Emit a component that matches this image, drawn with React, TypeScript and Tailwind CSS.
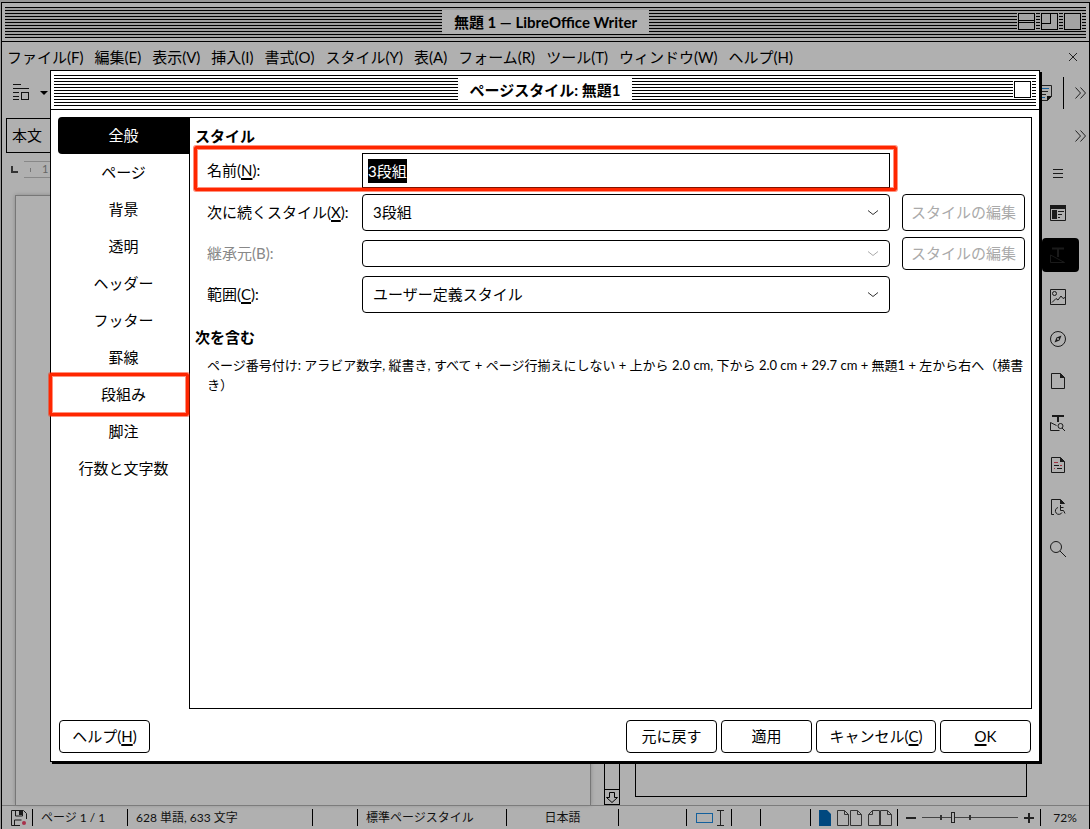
import React, { useState } from "react";

function cn(...classes: Array<string | false | null | undefined>) {
  return classes.filter(Boolean).join(" ");
}

const menus = [
  "ファイル(F)",
  "編集(E)",
  "表示(V)",
  "挿入(I)",
  "書式(O)",
  "スタイル(Y)",
  "表(A)",
  "フォーム(R)",
  "ツール(T)",
  "ウィンドウ(W)",
  "ヘルプ(H)",
];

const tabs = [
  "全般",
  "ページ",
  "背景",
  "透明",
  "ヘッダー",
  "フッター",
  "罫線",
  "段組み",
  "脚注",
  "行数と文字数",
];

function Key({ children }: { children: React.ReactNode }) {
  return <span className="underline decoration-2 underline-offset-2">{children}</span>;
}

function TitleBar({
  title,
  className,
  titleClassName,
  children,
}: {
  title: string;
  className?: string;
  titleClassName: string;
  children: React.ReactNode;
}) {
  return (
    <div className="border-b border-black px-[3px] pt-1 pb-[3px]">
      <div
        className={cn(
          "grid h-[31px] grid-cols-[1fr_auto_1fr] items-start bg-[repeating-linear-gradient(#000_0_1px,transparent_1px_3px)]",
          className
        )}
      >
        <span />
        <h1
          className={cn(
            "mt-[3px] h-6 px-3 text-[15px] leading-6 font-bold whitespace-nowrap",
            titleClassName
          )}
        >
          {title}
        </h1>
        <div className="mt-1.5 mr-1 flex justify-end gap-1">{children}</div>
      </div>
    </div>
  );
}

function WindowButton({
  label,
  className,
  children,
}: {
  label: string;
  className: string;
  children?: React.ReactNode;
}) {
  return (
    <button aria-label={label} className={cn("h-[17px] px-px", className)}>
      <svg width="17" height="17" fill="none" stroke="#000" shapeRendering="crispEdges">
        <path d="M.5 .5h16v16H.5z" />
        {children}
      </svg>
    </button>
  );
}

function Marker({ className }: { className: string }) {
  return (
    <span
      className={cn(
        "pointer-events-none absolute z-10 rounded-xs border-3 border-[#ff2600] shadow-[0_0_0_1px_#ff260080,inset_0_0_0_1px_#ff260080]",
        className
      )}
    />
  );
}

function Field({
  id,
  value,
  disabled,
  className,
}: {
  id: string;
  value: string;
  disabled?: boolean;
  className: string;
}) {
  return (
    <div className="relative">
      <select
        id={id}
        disabled={disabled}
        className={cn(
          "block w-full appearance-none rounded-[4px] border border-black bg-white px-2.5 text-[15px]",
          className
        )}
      >
        <option>{value}</option>
      </select>
      <svg
        className="pointer-events-none absolute inset-y-0 right-[11px] my-auto"
        width="12"
        height="8"
        fill="none"
        stroke={disabled ? "#aaa" : "#333"}
      >
        <path d="M1 1.500l5 4 5-4" />
      </svg>
    </div>
  );
}

function DialogButton({
  className,
  disabled,
  children,
}: {
  className?: string;
  disabled?: boolean;
  children: React.ReactNode;
}) {
  return (
    <button
      disabled={disabled}
      className={cn(
        "h-[33px] rounded-[4px] border border-black bg-white text-[15px] disabled:text-[#aaa]",
        className
      )}
    >
      {children}
    </button>
  );
}

function Chevrons() {
  return (
    <svg width="11" height="12" fill="none" stroke="#222">
      <path d="M.5 .5l5 5.500-5 5.500M5.500 .5l5 5.500-5 5.500" />
    </svg>
  );
}

const sheet = "M1.500 .5h9l4 4v11h-13z";

const sidebarIcons = [
  {
    label: "サイドバーの設定",
    art: <path d="M3 6.500h10M3 10.500h10M3 14.500h10" />,
  },
  {
    label: "プロパティ",
    art: (
      <>
        <path d="M.5 .5h15v15H.5z" />
        <path d="M0 0h16v4H0zM2 5h5v9H2z" fill="#1a1a1a" stroke="none" />
        <path d="M8 6.500h6M8 9.500h4M8 12.500h2" />
      </>
    ),
  },
  {
    label: "スタイル",
    art: (
      <>
        <path d="M2 1.500h12M8 1v9" strokeWidth="2" />
        <path d="M.5 8v7.500h14z" />
      </>
    ),
  },
  {
    label: "ギャラリー",
    art: (
      <>
        <path d="M.5 .5h15v15H.5z" />
        <circle cx="4.500" cy="4.500" r="2" />
        <path d="M2 13.500l4-4 2 1.500 3-4 2 2.500 2-1" />
      </>
    ),
  },
  {
    label: "ナビゲーター",
    art: (
      <>
        <circle cx="8" cy="8" r="7.500" />
        <path d="M11.500 4.500l-2 5-5 2 2-5z" fill="#1a1a1a" stroke="none" />
        <circle cx="8" cy="8" r="1" fill="#b0b0b0" stroke="none" />
      </>
    ),
  },
  {
    label: "ページ",
    art: (
      <>
        <path d={sheet} />
        <path d="M10 0v5h5z" fill="#1a1a1a" stroke="none" />
      </>
    ),
  },
  {
    label: "スタイルインスペクター",
    art: (
      <>
        <path d="M2 1h12M8 1v6" strokeWidth="2" />
        <path d="M.5 15.500v-8l6 3M.5 15.500h9" />
        <circle cx="10.500" cy="11" r="2.500" />
        <path d="M12 13l3 3" />
      </>
    ),
  },
  {
    label: "変更の管理",
    art: (
      <>
        <path d={sheet} />
        <path d="M10 0v5h5z" fill="#1a1a1a" stroke="none" />
        <path d="M4 8.500h5M7 11.500h5" />
        <path d="M4 5.500h4M10 8.500h2M4 11.500h1" stroke="#a03040" />
      </>
    ),
  },
  {
    label: "アクセシビリティ",
    art: (
      <>
        <path d="M4 15.500H1.500V.5h9l4 4" />
        <path d="M10 0v5h5z" fill="#1a1a1a" stroke="none" />
        <path d="M8 8.500a3.500 3.500 0 1 0 4 5M10.500 6v5.500h3l1.500 3M10.500 8.500h3" />
      </>
    ),
  },
  {
    label: "検索",
    art: (
      <>
        <circle cx="6" cy="6" r="5.500" />
        <path d="M10 10l6 6" />
      </>
    ),
  },
];

function Cell({ className, children }: { className: string; children?: React.ReactNode }) {
  return (
    <div
      className={cn(
        "flex h-[17px] shrink-0 items-center border-r border-black leading-[17px] whitespace-nowrap",
        className
      )}
    >
      {children}
    </div>
  );
}

function StatusBar() {
  return (
    <footer className="flex h-6 shrink-0 items-center border-t border-[#7c7c7c] text-xs text-[#111]">
      <Cell className="w-[31px] pl-[9px]">
        <svg width="17" height="16" fill="none" stroke="#1a1a1a">
          <path d="M9 15.500H.5V.5h12l3 3V9M3.500 15v-5h7M4.500 1v5h7V1" />
          <path d="M8 1h3v4H8z" fill="#1a1a1a" stroke="none" />
          <circle cx="13" cy="13" r="2" fill="#a8304a" stroke="none" />
        </svg>
      </Cell>
      <Cell className="w-[95px] pl-2">ページ 1 / 1</Cell>
      <Cell className="w-[185px] pl-2">628 単語, 633 文字</Cell>
      <Cell className="w-[45px]" />
      <Cell className="w-[149px] pl-2">標準ページスタイル</Cell>
      <Cell className="w-28 justify-center">日本語</Cell>
      <Cell className="grow" />
      <Cell className="w-[45px] justify-end pr-[7px]">
        <svg width="28" height="17" fill="none" shapeRendering="crispEdges">
          <path d="M.5 4.500h16v9H.5z" stroke="#14609c" />
          <path d="M21 1.500h7M21 16.500h7M24.500 1v16" stroke="#222" />
        </svg>
      </Cell>
      <Cell className="w-[29px]" />
      <Cell className="w-[50px]" />
      <Cell className="w-[87px] pl-2">
        <svg width="74" height="16" fill="none" stroke="#333">
          <path d="M0 0h8l4 4v12H0z" fill="#00487f" stroke="none" />
          <path d="M18.500 .5h7l4 4v11h-11zM25.500 .5v4h4M31.500 .5h7l4 4v11h-11zM38.500 .5v4h4" />
          <path d="M53.500 .5h7v15h-11v-11zM53.500 .5v4h-4M61.500 .5h7l4 4v11h-11zM68.500 .5v4h4" />
        </svg>
      </Cell>
      <Cell className="w-[143px] justify-end gap-1.5 pr-1.5">
        <button aria-label="縮小">
          <svg width="10" height="10" stroke="#222" strokeWidth="2">
            <path d="M0 5h10" />
          </svg>
        </button>
        <div className="relative flex">
          <input
            type="range"
            aria-label="ズーム"
            defaultValue="31"
            className="h-[11px] w-24 appearance-none bg-[linear-gradient(#444,#444)] bg-[length:100%_1px] bg-center bg-no-repeat [&::-webkit-slider-thumb]:h-[11px] [&::-webkit-slider-thumb]:w-1 [&::-webkit-slider-thumb]:appearance-none [&::-webkit-slider-thumb]:border [&::-webkit-slider-thumb]:border-[#222] [&::-webkit-slider-thumb]:bg-[#b0b0b0]"
          />
          <span className="pointer-events-none absolute top-[3px] left-[18px] h-[5px] w-0.5 bg-[#333]" />
          <span className="pointer-events-none absolute top-[3px] left-[47px] h-[5px] w-0.5 bg-[#333]" />
        </div>
        <button aria-label="拡大">
          <svg width="10" height="10" stroke="#222" strokeWidth="2">
            <path d="M0 5h10M5 0v10" />
          </svg>
        </button>
      </Cell>
      <span className="w-12 shrink-0 text-center">72%</span>
    </footer>
  );
}

function PageStyleDialog() {
  const [active, setActive] = useState("全般");
  const [name, setName] = useState("3段組");

  return (
    <section
      role="dialog"
      aria-label="ページスタイル"
      className="absolute inset-x-[50px] top-[70px] bottom-[67px] flex flex-col border border-black bg-white shadow-[2px_2px_0_#000]"
    >
      <TitleBar title="ページスタイル: 無題1" titleClassName="bg-white">
        <WindowButton label="閉じる" className="bg-white" />
      </TitleBar>

      <div className="flex grow px-[7px] pt-[7px]">
        <nav className="flex w-[131px] shrink-0 flex-col">
          {tabs.map((tab) => (
            <button
              key={tab}
              onClick={() => setActive(tab)}
              className={cn(
                "relative h-[37px] rounded-l-[4px] text-[15px]",
                tab === active && "bg-black text-white"
              )}
            >
              {tab}
              {tab === "段組み" && <Marker className="-inset-y-[3px] right-0 -left-[9px]" />}
            </button>
          ))}
        </nav>

        <div className="grow border border-black pt-1.5 pr-1.5 pb-4 pl-[5px]">
          <h2 className="h-[29px] text-[15px] leading-6 font-bold">スタイル</h2>
          <div className="grid grid-cols-[155px_1fr_135px] items-center gap-y-1.5 pl-3 text-[15px]">
            <div className="relative col-span-2 grid grid-cols-[155px_1fr] items-center">
              <label htmlFor="style-name">
                名前(<Key>N</Key>):
              </label>
              <div className="flex h-[35px] items-center border border-black px-[5px]">
                <input
                  id="style-name"
                  value={name}
                  onChange={(e) => setName(e.target.value)}
                  className="field-sizing-content h-6 bg-black text-white outline-none"
                />
              </div>
              <Marker className="-top-[7px] -right-[7px] -bottom-[3px] -left-[13px]" />
            </div>
            <span />

            <label htmlFor="next-style">
              次に続くスタイル(<Key>X</Key>):
            </label>
            <Field id="next-style" value="3段組" className="h-[37px]" />
            <DialogButton disabled className="ml-3 h-[37px]">
              スタイルの編集
            </DialogButton>

            <label htmlFor="parent-style" className="text-[#888]">
              継承元(B):
            </label>
            <Field id="parent-style" value="" disabled className="h-[27px]" />
            <DialogButton disabled className="ml-3">
              スタイルの編集
            </DialogButton>

            <label htmlFor="category">
              範囲(<Key>C</Key>):
            </label>
            <Field id="category" value="ユーザー定義スタイル" className="h-[37px]" />
          </div>

          <h2 className="mt-3 text-[15px] leading-6 font-bold">次を含む</h2>
          <p className="mt-1.5 pl-3 text-[13px] leading-5">
            ページ番号付け: アラビア数字, 縦書き, すべて + ページ行揃えにしない + 上から 2.0 cm, 下から
            2.0 cm + 29.7 cm + 無題1 + 左から右へ（横書き）
          </p>
        </div>
      </div>

      <div className="flex gap-1 px-2 pt-[11px] pb-2">
        <DialogButton className="mr-auto w-[91px]">
          ヘルプ(<Key>H</Key>)
        </DialogButton>
        <DialogButton className="w-[91px]">元に戻す</DialogButton>
        <DialogButton className="w-[91px]">適用</DialogButton>
        <DialogButton className="w-[120px]">
          キャンセル(<Key>C</Key>)
        </DialogButton>
        <DialogButton className="w-[91px]">
          <Key>O</Key>K
        </DialogButton>
      </div>
    </section>
  );
}

export default function App() {
  return (
    <div className="relative flex h-screen flex-col bg-[#989898] pt-0.5 pl-px font-[Lato,'Noto_Sans_CJK_JP',sans-serif] text-black">
      <div className="flex min-h-0 grow flex-col border-x border-t border-black bg-[#b0b0b0]">
        <TitleBar
          title="無題 1 — LibreOffice Writer"
          className="bg-[#9f9f9f]"
          titleClassName="bg-[#b0b0b0]"
        >
          <WindowButton label="最小化" className="bg-[#a4a4a4]">
            <path d="M0 7.500h17M0 9.500h17" />
          </WindowButton>
          <WindowButton label="最大化" className="bg-[#a4a4a4]">
            <path d="M9.500 0v10.500H0" />
          </WindowButton>
          <WindowButton label="閉じる" className="bg-[#a4a4a4]" />
        </TitleBar>

        <nav className="flex h-[30px] items-center gap-[11px] pr-3 pl-[5px] text-[15px] whitespace-nowrap">
          {menus.map((menu) => (
            <button key={menu}>{menu}</button>
          ))}
          <button aria-label="文書を閉じる" className="ml-auto">
            <svg width="8" height="8" stroke="#222">
              <path d="M0 0l8 8M8 0l-8 8" />
            </svg>
          </button>
        </nav>

        <div className="flex h-[41px] shrink-0 items-center gap-[11px] pr-[3px] pl-[11px]">
          <svg width="16" height="17" fill="none" stroke="#111" shapeRendering="crispEdges">
            <path d="M0 .5h8M0 4.500h16M0 8.500h6M0 12.500h6M0 15.500h6M8.500 8.500h7v7h-7z" />
          </svg>
          <svg width="8" height="4">
            <path d="M0 0h8L4 4z" />
          </svg>
          <svg className="ml-auto" width="16" height="16" fill="none" stroke="#222">
            <path d="M.5 .5h15v11l-4 4H.5z" />
            <path d="M11 16v-5h5z" fill="#111" stroke="none" />
            <path d="M3 6.500h9M3 9.500h7" />
            <path d="M3 3.500h10M3 12.500h6" stroke="#14609c" />
          </svg>
          <span className="h-8 border-r border-black" />
          <button aria-label="その他" className="h-3">
            <Chevrons />
          </button>
        </div>

        <div className="flex h-[45px] shrink-0 items-center pr-[3px] pl-1">
          <select
            aria-label="段落スタイル"
            className="h-[35px] w-36 appearance-none border border-black px-[5px] text-[15px]"
          >
            <option>本文</option>
          </select>
          <button aria-label="その他" className="ml-auto h-3">
            <Chevrons />
          </button>
        </div>

        <main className="flex min-h-0 grow">
          <div className="flex w-[602px] shrink-0 flex-col">
            <div className="mt-[3px] flex h-[17px] items-center gap-1.5 pl-[9px]">
              <svg width="7" height="7">
                <path d="M0 0h2v5h5v2H0z" fill="#333" />
              </svg>
              <div className="flex h-[17px] grow items-center gap-[11px] border-y border-[#888] pl-1.5 text-[11px] text-[#666]">
                <span className="h-1 border-l border-[#777]" />1
              </div>
            </div>
            <div className="mt-[17px] mr-[13px] ml-[13px] grow border border-b-0 border-[#777] shadow-[0_0_4px_#888]" />
          </div>
          <div className="flex w-4 shrink-0 flex-col justify-end border-x border-black">
            <button aria-label="下へスクロール" className="border-y border-black">
              <svg width="14" height="14" fill="none" stroke="#000">
                <path d="M4.500 2.500h5v5h3l-5.500 5-5.500-5h3z" />
              </svg>
            </button>
          </div>
          <div className="mx-[15px] mt-2 mb-2 grow border border-black" />
          <aside className="-mt-2 flex w-[47px] shrink-0 flex-col">
            {sidebarIcons.map((item) => (
              <button
                key={item.label}
                aria-label={item.label}
                className={cn(
                  "my-1 flex h-[34px] w-[37px] shrink-0 items-center justify-center rounded-[4px] pr-1.5",
                  item.label === "スタイル" && "bg-black"
                )}
              >
                <svg width="16" height="16" fill="none" stroke="#1a1a1a">
                  {item.art}
                </svg>
              </button>
            ))}
          </aside>
        </main>

        <StatusBar />
      </div>

      <PageStyleDialog />
    </div>
  );
}
